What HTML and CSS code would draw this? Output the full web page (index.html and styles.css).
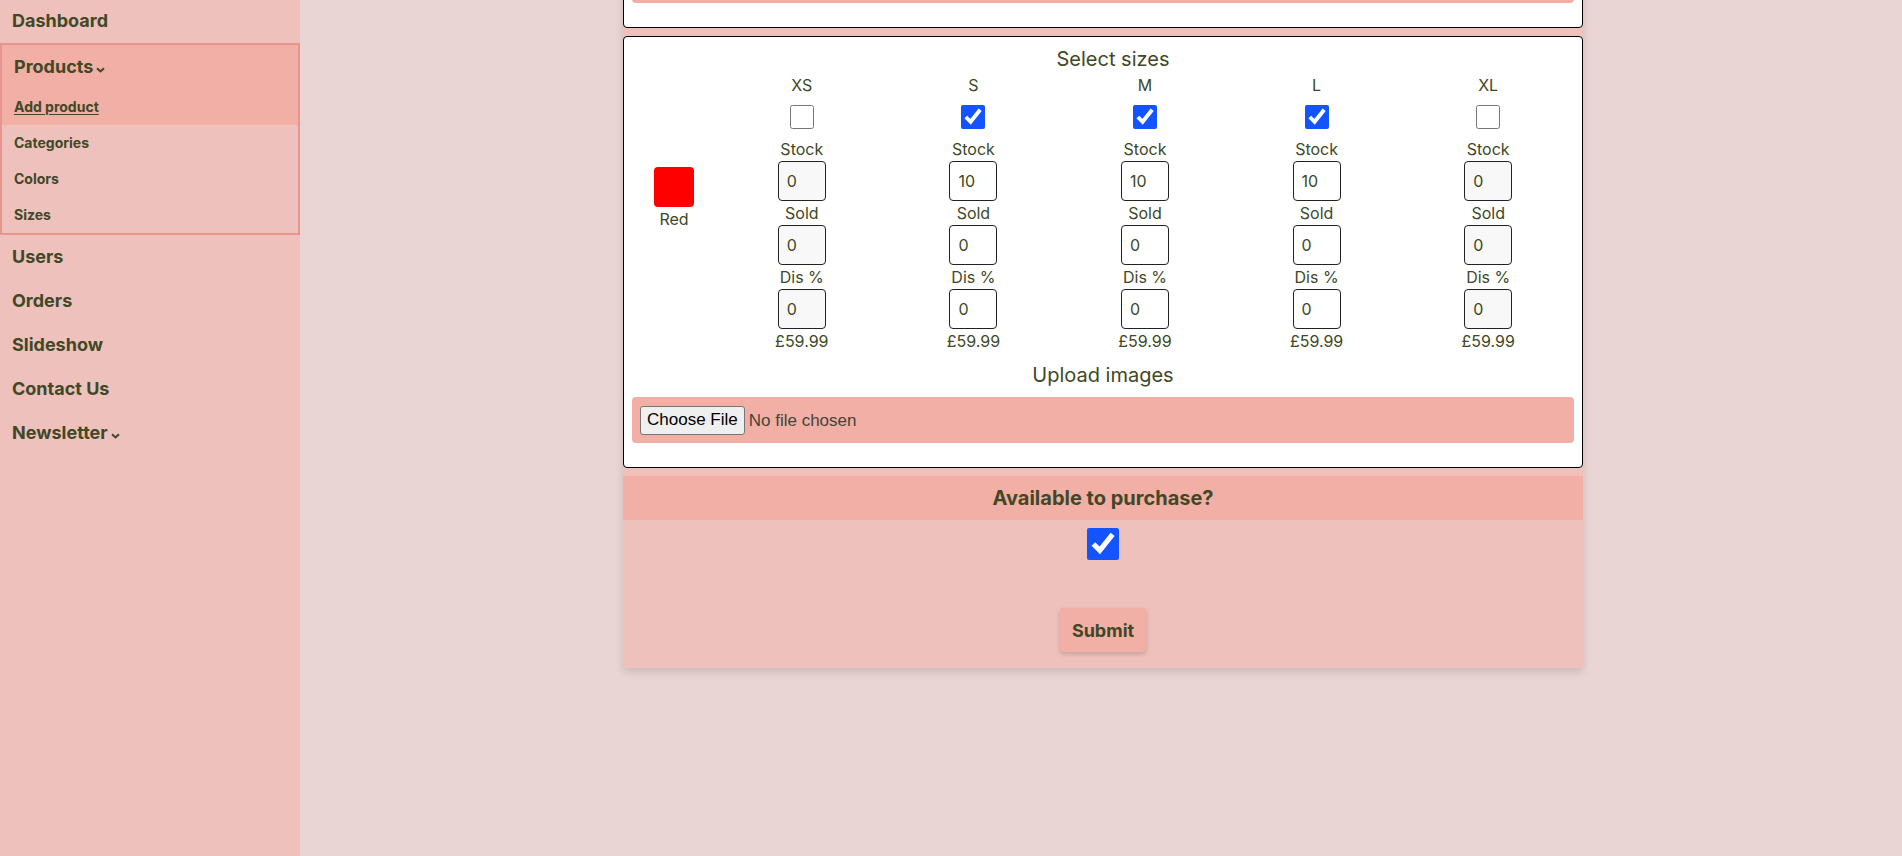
FILE: index.html
```html
<!DOCTYPE html>
<html lang="en">
<head>
<meta charset="utf-8">
<title>Add product</title>
<link rel="stylesheet" href="styles.css">
</head>
<body>
<aside class="sidebar">
  <a class="nav-item nav-first" href="#">Dashboard</a>
  <div class="nav-group">
    <div class="nav-group-active">
      <a class="nav-item nav-group-head" href="#">Products<svg class="chev" width="9" height="6" viewBox="0 0 9 6"><path d="M1 1.2l3.5 3.3L8 1.2" stroke="currentColor" stroke-width="2" fill="none"/></svg></a>
      <a class="sub-item sub-current" href="#">Add product</a>
    </div>
    <a class="sub-item" href="#">Categories</a>
    <a class="sub-item" href="#">Colors</a>
    <a class="sub-item" href="#">Sizes</a>
  </div>
  <a class="nav-item" href="#">Users</a>
  <a class="nav-item" href="#">Orders</a>
  <a class="nav-item" href="#">Slideshow</a>
  <a class="nav-item" href="#">Contact Us</a>
  <a class="nav-item" href="#">Newsletter<svg class="chev" width="9" height="6" viewBox="0 0 9 6"><path d="M1 1.2l3.5 3.3L8 1.2" stroke="currentColor" stroke-width="2" fill="none"/></svg></a>
</aside>

<main class="main">
  <form class="form-wrap">
    <div class="card">
      <div class="upload-bar"><input class="file" type="file"></div>
    </div>

    <div class="card">
      <div class="color-row">
        <div class="color-col">
          <div class="swatch"></div>
          <div class="color-name">Red</div>
        </div>
        <div class="sizes">
          <div class="sizes-title">Select sizes</div>
          <div class="size-grid">
            <div class="size-col">
              <div class="lbl">XS</div>
              <input class="chk" type="checkbox">
              <div class="lbl gap">Stock</div>
              <input class="num" type="text" value="0" disabled>
              <div class="lbl">Sold</div>
              <input class="num" type="text" value="0" disabled>
              <div class="lbl">Dis %</div>
              <input class="num" type="text" value="0" disabled>
              <div class="lbl">£59.99</div>
            </div>
            <div class="size-col">
              <div class="lbl">S</div>
              <input class="chk" type="checkbox" checked>
              <div class="lbl gap">Stock</div>
              <input class="num" type="text" value="10">
              <div class="lbl">Sold</div>
              <input class="num" type="text" value="0">
              <div class="lbl">Dis %</div>
              <input class="num" type="text" value="0">
              <div class="lbl">£59.99</div>
            </div>
            <div class="size-col">
              <div class="lbl">M</div>
              <input class="chk" type="checkbox" checked>
              <div class="lbl gap">Stock</div>
              <input class="num" type="text" value="10">
              <div class="lbl">Sold</div>
              <input class="num" type="text" value="0">
              <div class="lbl">Dis %</div>
              <input class="num" type="text" value="0">
              <div class="lbl">£59.99</div>
            </div>
            <div class="size-col">
              <div class="lbl">L</div>
              <input class="chk" type="checkbox" checked>
              <div class="lbl gap">Stock</div>
              <input class="num" type="text" value="10">
              <div class="lbl">Sold</div>
              <input class="num" type="text" value="0">
              <div class="lbl">Dis %</div>
              <input class="num" type="text" value="0">
              <div class="lbl">£59.99</div>
            </div>
            <div class="size-col">
              <div class="lbl">XL</div>
              <input class="chk" type="checkbox">
              <div class="lbl gap">Stock</div>
              <input class="num" type="text" value="0" disabled>
              <div class="lbl">Sold</div>
              <input class="num" type="text" value="0" disabled>
              <div class="lbl">Dis %</div>
              <input class="num" type="text" value="0" disabled>
              <div class="lbl">£59.99</div>
            </div>
          </div>
        </div>
      </div>
      <div class="upload-title">Upload images</div>
      <div class="upload-bar"><input class="file" type="file"></div>
    </div>

    <div class="avail-head">Available to purchase?</div>
    <div class="avail-body">
      <input class="chk-big" type="checkbox" checked>
      <button class="submit" type="button">Submit</button>
    </div>
  </form>
</main>
</body>
</html>
```

FILE: styles.css
```css
* { box-sizing: border-box; }

html, body {
  margin: 0;
  height: 100%;
}

body {
  display: flex;
  overflow: hidden;
  background: #e8d5d4;
  font-family: Inter, "Noto Sans", sans-serif;
  color: #404826;
}

/* Sidebar */
.sidebar {
  width: 300px;
  flex-shrink: 0;
  height: 100%;
  background: #eec1bd;
  display: flex;
  flex-direction: column;
}

.nav-item {
  display: block;
  padding: 10px 12px;
  line-height: 24px;
  font-size: 18px;
  font-weight: 700;
  color: #404826;
  text-decoration: none;
}

.nav-first {
  padding-top: 9px;
}

.nav-item .chev {
  margin-left: 3px;
}

.nav-group {
  border: 2px solid #e8958f;
}

.nav-group-active {
  background: #f2afa6;
}

.sub-item {
  display: block;
  padding: 8px 12px;
  line-height: 20px;
  font-size: 14px;
  font-weight: 700;
  color: #404826;
  text-decoration: none;
}

.sub-current {
  text-decoration: underline;
  text-underline-offset: 2px;
}

/* Main */
.main {
  flex: 1;
  display: flex;
  justify-content: center;
  align-items: flex-start;
  padding-left: 4px;
  overflow: hidden;
}

.form-wrap {
  width: 960px;
  margin: -52px 0 0;
  background: #eec1bc;
  display: flex;
  flex-direction: column;
  gap: 8px;
  box-shadow: 0 4px 8px rgba(0, 0, 0, 0.12);
}

.card {
  background: #fff;
  border: 1px solid #000;
  border-radius: 4px;
  padding: 8px;
}

.color-row {
  display: flex;
  align-items: center;
}

.color-col {
  width: 84px;
  display: flex;
  flex-direction: column;
  align-items: center;
}

.swatch {
  width: 40px;
  height: 40px;
  background: #ff0000;
  border-radius: 4px;
}

.color-name {
  font-size: 16px;
  line-height: 24px;
}

.sizes {
  flex: 1;
}

.sizes-title {
  text-align: center;
  font-size: 20px;
  line-height: 28px;
  padding-right: 64px;
}

.size-grid {
  display: grid;
  grid-template-columns: repeat(5, 1fr);
}

.size-col {
  display: flex;
  flex-direction: column;
  align-items: center;
}

.lbl {
  font-size: 16px;
  line-height: 24px;
}

.lbl.gap {
  margin-top: 8px;
}

.chk {
  width: 24px;
  height: 24px;
  margin: 8px 0 0;
  accent-color: #1454ff;
}

.num {
  width: 48px;
  height: 40px;
  border: 1px solid #222;
  border-radius: 4px;
  padding: 0 0 0 8px;
  font-family: Inter, "Noto Sans", sans-serif;
  font-size: 16px;
  color: #404826;
  background: #fff;
  outline: none;
}

.num:disabled {
  background: #f8f8f8;
  color: #404826;
}

.upload-title {
  margin-top: 8px;
  text-align: center;
  font-size: 20px;
  line-height: 28px;
}

.upload-bar {
  margin: 8px 0 16px;
  height: 46px;
  padding: 8px;
  background: #f2afa6;
  border-radius: 4px;
  display: flex;
  align-items: center;
}

.card:first-child .upload-bar {
  margin-top: 0;
}

.file {
  font-family: "Liberation Sans", Arial, sans-serif;
  font-size: 17px;
  color: #444438;
}

.file::file-selector-button {
  font-family: "Liberation Sans", Arial, sans-serif;
  font-size: 17px;
  height: 29px;
  padding: 0 6px;
  margin-right: 4px;
  border: 1px solid #767676;
  border-radius: 3px;
  background: #efefef;
  color: #000;
}

/* Availability */
.avail-head {
  height: 44px;
  line-height: 44px;
  background: #f2afa6;
  text-align: center;
  font-size: 20px;
  font-weight: 700;
}

.avail-body {
  display: flex;
  flex-direction: column;
  align-items: center;
  padding: 0 0 16px;
}

.chk-big {
  width: 32px;
  height: 32px;
  margin: 0;
  accent-color: #1454ff;
}

.submit {
  margin-top: 48px;
  height: 44px;
  padding: 0 12px;
  border: none;
  border-radius: 4px;
  background: #f2afa6;
  box-shadow: 0 2px 5px rgba(0, 0, 0, 0.18);
  font-family: Inter, "Noto Sans", sans-serif;
  font-size: 18px;
  font-weight: 700;
  color: #404826;
}
```
